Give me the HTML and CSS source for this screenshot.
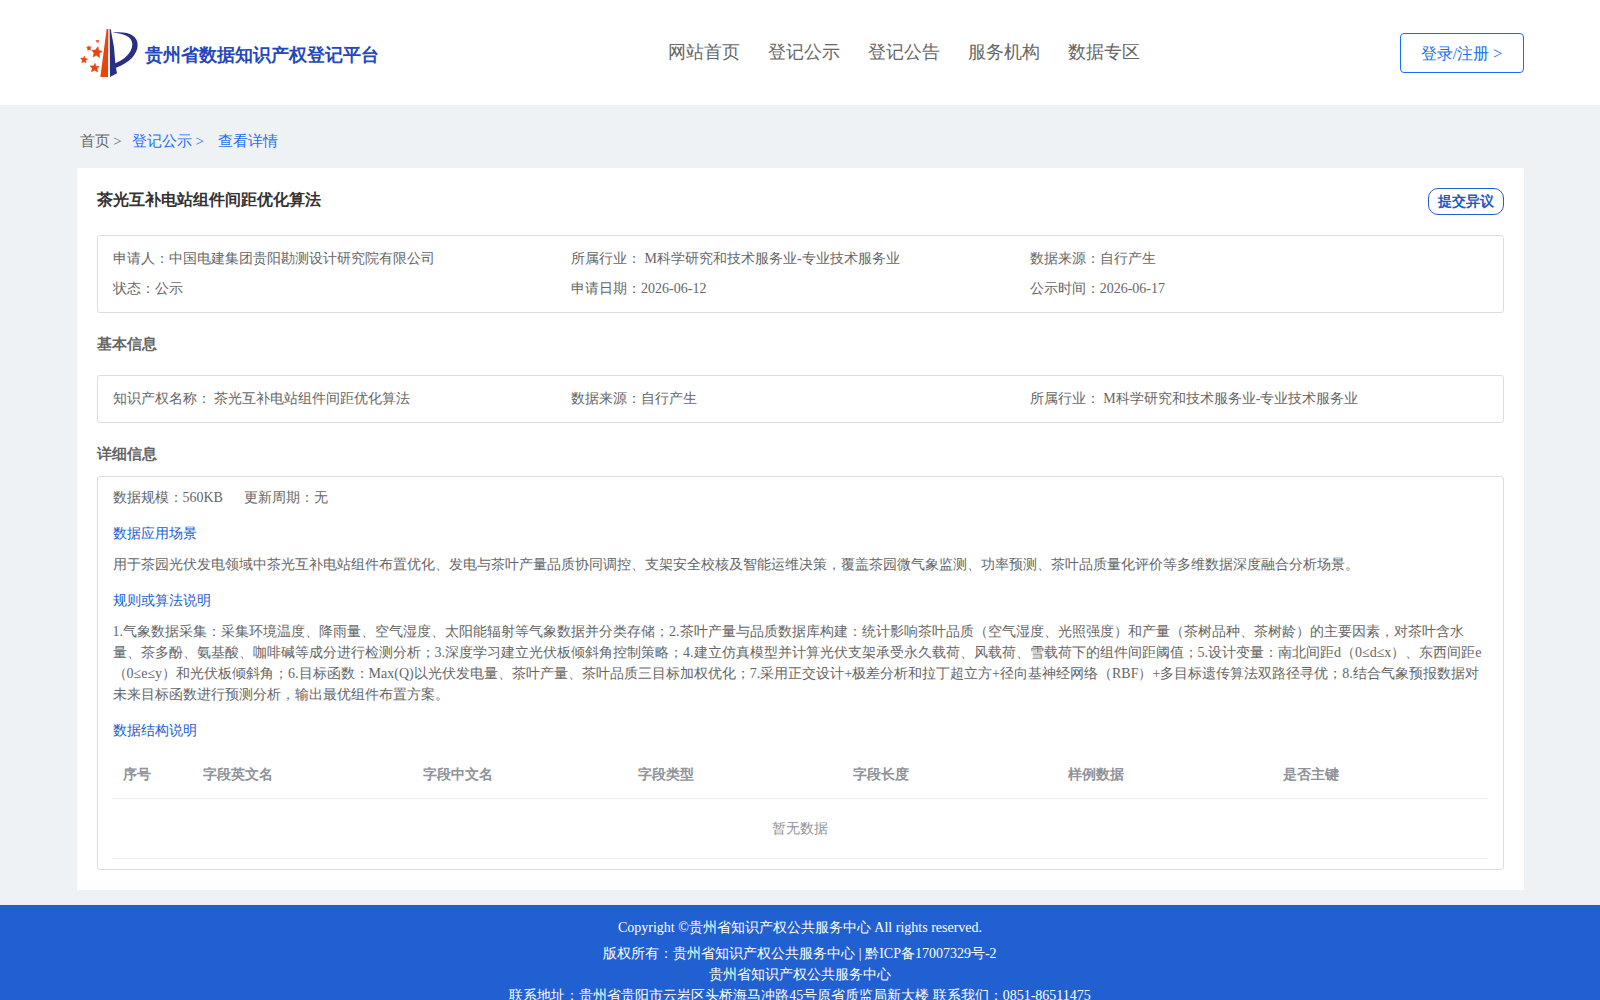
FILE: index.html
```html
<!DOCTYPE html>
<html lang="en">
<head>
  <meta charset="UTF-8">
  <meta name="viewport" content="width=device-width, initial-scale=1.0">
  <title>贵州省数据知识产权登记平台</title>
  <link rel="stylesheet" href="styles.css">
</head>
<body>
  <header class="header">
    <div class="container header-inner">
      <div class="logo">
        <svg class="logo-icon" viewBox="60 54 174 150" width="58" height="50">
          <path fill="#e8450f" d="M140 57h5l-1 144h-23z"/>
          <path fill="#2a2f86" d="M149 57h3l10 55 4 48C192 150 217 127 217 103c0-22-24-34-60-35 45-6 76 8 76 36 0 28-24 54-65 69l3 17-21 11z"/>
          <g fill="#e8450f" stroke="#e8450f" stroke-width="1.5">
            <path d="M114 110l2 11 11 3-9 6 1 13-10-7-10 5 3-12-7-8 11-1z"/>
            <path d="M105 160l3 9 10 0-7 7 2 10-9-5-10 4 3-10-7-7 11-1z"/>
            <path d="M74 138l1 7 8 2-6 4 1 8-6-4-7 3 2-7-5-6 8-1z"/>
            <path d="M84 107l3 4 6-1-2 5 1 5-4-1-5 2v-5l-3-4 5-1z"/>
            <path d="M111 90l2 2 4-1-2 3 1 3-3-1-3 1v-3l-2-2 3-1z"/>
          </g>
        </svg>
        <span class="logo-text">贵州省数据知识产权登记平台</span>
      </div>
      <nav class="nav">
        <a>网站首页</a>
        <a>登记公示</a>
        <a>登记公告</a>
        <a>服务机构</a>
        <a>数据专区</a>
      </nav>
      <a class="login">登录/注册 &gt;</a>
    </div>
  </header>

  <main class="container">
    <div class="breadcrumb">
      <span>首页 &gt;</span>
      <a class="crumb-list">登记公示 &gt;</a>
      <a class="crumb-current">查看详情</a>
    </div>

    <div class="card">
      <div class="card-head">
        <h1>茶光互补电站组件间距优化算法</h1>
        <button class="objection">提交异议</button>
      </div>
      <div class="box grid">
        <div>申请人：中国电建集团贵阳勘测设计研究院有限公司</div>
        <div>所属行业： M科学研究和技术服务业-专业技术服务业</div>
        <div>数据来源：自行产生</div>
        <div>状态：公示</div>
        <div>申请日期：2026-06-12</div>
        <div>公示时间：2026-06-17</div>
      </div>

      <h2 class="basic-title">基本信息</h2>
      <div class="box grid">
        <div>知识产权名称： 茶光互补电站组件间距优化算法</div>
        <div>数据来源：自行产生</div>
        <div>所属行业： M科学研究和技术服务业-专业技术服务业</div>
      </div>

      <h2 class="detail-title">详细信息</h2>
      <div class="box detail">
        <div class="summary">
          <span>数据规模：560KB</span>
          <span>更新周期：无</span>
        </div>
        <h3>数据应用场景</h3>
        <p>用于茶园光伏发电领域中茶光互补电站组件布置优化、发电与茶叶产量品质协同调控、支架安全校核及智能运维决策，覆盖茶园微气象监测、功率预测、茶叶品质量化评价等多维数据深度融合分析场景。</p>
        <h3>规则或算法说明</h3>
        <p>1.气象数据采集：采集环境温度、降雨量、空气湿度、太阳能辐射等气象数据并分类存储；2.茶叶产量与品质数据库构建：统计影响茶叶品质（空气湿度、光照强度）和产量（茶树品种、茶树龄）的主要因素，对茶叶含水量、茶多酚、氨基酸、咖啡碱等成分进行检测分析；3.深度学习建立光伏板倾斜角控制策略；4.建立仿真模型并计算光伏支架承受永久载荷、风载荷、雪载荷下的组件间距阈值；5.设计变量：南北间距d（0≤d≤x）、东西间距e（0≤e≤y）和光伏板倾斜角；6.目标函数：Max(Q)以光伏发电量、茶叶产量、茶叶品质三目标加权优化；7.采用正交设计+极差分析和拉丁超立方+径向基神经网络（RBF）+多目标遗传算法双路径寻优；8.结合气象预报数据对未来目标函数进行预测分析，输出最优组件布置方案。</p>
        <h3>数据结构说明</h3>
        <table class="table">
          <thead>
            <tr>
              <th class="col-index">序号</th>
              <th class="col-name">字段英文名</th>
              <th>字段中文名</th>
              <th>字段类型</th>
              <th>字段长度</th>
              <th>样例数据</th>
              <th>是否主键</th>
            </tr>
          </thead>
          <tbody>
            <tr>
              <td colspan="7">暂无数据</td>
            </tr>
          </tbody>
        </table>
      </div>
    </div>
  </main>

  <footer class="footer">
    <div class="copyright">Copyright ©贵州省知识产权公共服务中心 All rights reserved.</div>
    <div>版权所有：贵州省知识产权公共服务中心 | 黔ICP备17007329号-2</div>
    <div>贵州省知识产权公共服务中心</div>
    <div>联系地址：贵州省贵阳市云岩区头桥海马冲路45号原省质监局新大楼 联系我们：0851-86511475</div>
  </footer>
</body>
</html>
```
FILE: styles.css
```css
* {
  box-sizing: border-box;
}
body {
  margin: 0;
  height: 1000px;
  overflow: hidden;
  background: #eef2f5;
  color: #666;
  font-family: "Liberation Serif", serif;
  font-size: 14px;
  line-height: 21px;
}
h1, h2, h3, p {
  margin: 0;
}
.container {
  width: 1447px;
  margin: 0 auto;
}
.header {
  height: 105px;
  background: #fff;
}
.header-inner {
  display: flex;
  justify-content: space-between;
  height: 105px;
}
.logo {
  display: flex;
  width: 332px;
  padding: 28px 0 0 3px;
}
.logo-text {
  margin-left: 7px;
  padding-top: 14px;
  color: #2448bb;
  font-size: 18px;
  font-weight: bold;
  line-height: 27px;
}
.nav {
  display: flex;
  gap: 28px;
  padding-top: 39px;
  font-size: 18px;
  line-height: 27px;
}
.login {
  width: 124px;
  height: 40px;
  margin-top: 33px;
  border: 1px solid #1a6ff0;
  border-radius: 4px;
  color: #1a6ff0;
  font-size: 16px;
  line-height: 40px;
  text-align: center;
}
.breadcrumb {
  display: flex;
  height: 63px;
  padding: 25px 3px 0;
  font-size: 15px;
  line-height: 22px;
}
.breadcrumb a {
  color: #1a6ff0;
}
.crumb-list {
  margin-left: 10px;
}
.crumb-current {
  margin-left: 14px;
}
.card {
  height: 722px;
  padding: 20px;
  background: #fff;
}
.card-head {
  display: flex;
  justify-content: space-between;
  height: 47px;
}
h1 {
  color: #333;
  font-size: 16px;
  line-height: 24px;
}
.objection {
  width: 76px;
  height: 27px;
  padding: 0;
  border: 1px solid #2060d0;
  border-radius: 10px;
  background: #fff;
  color: #2158c4;
  font: bold 14px "Liberation Serif", serif;
}
.box {
  padding: 8px 15px;
  border: 1px solid #ddd;
  border-radius: 3px;
}
.grid {
  display: grid;
  grid-template-columns: 458.6px 458.6px 1fr;
  line-height: 30px;
}
h2 {
  font-size: 15px;
  line-height: 22px;
}
.basic-title {
  padding: 20px 0;
}
.detail-title {
  padding: 20px 0 11px;
}
.detail {
  height: 394px;
  padding-top: 10px;
}
.summary {
  display: flex;
  gap: 21px;
}
h3 {
  margin: 15px 0 10px;
  color: #2160d0;
  font-size: 14px;
  font-weight: normal;
}
.table {
  width: 100%;
  table-layout: fixed;
  border-collapse: separate;
  border-spacing: 0;
  color: #909399;
}
.table th,
.table td {
  padding: 0 10px;
  border-bottom: 1px solid #ebeef5;
}
.table th {
  height: 48px;
  text-align: left;
}
.table td {
  height: 60px;
  text-align: center;
}
.col-index {
  width: 80px;
}
.col-name {
  width: 220px;
}
.footer {
  height: 110px;
  margin-top: 15px;
  padding-top: 12px;
  background: #2160d0;
  color: #fff;
  text-align: center;
}
.copyright {
  margin-bottom: 5px;
}
```
